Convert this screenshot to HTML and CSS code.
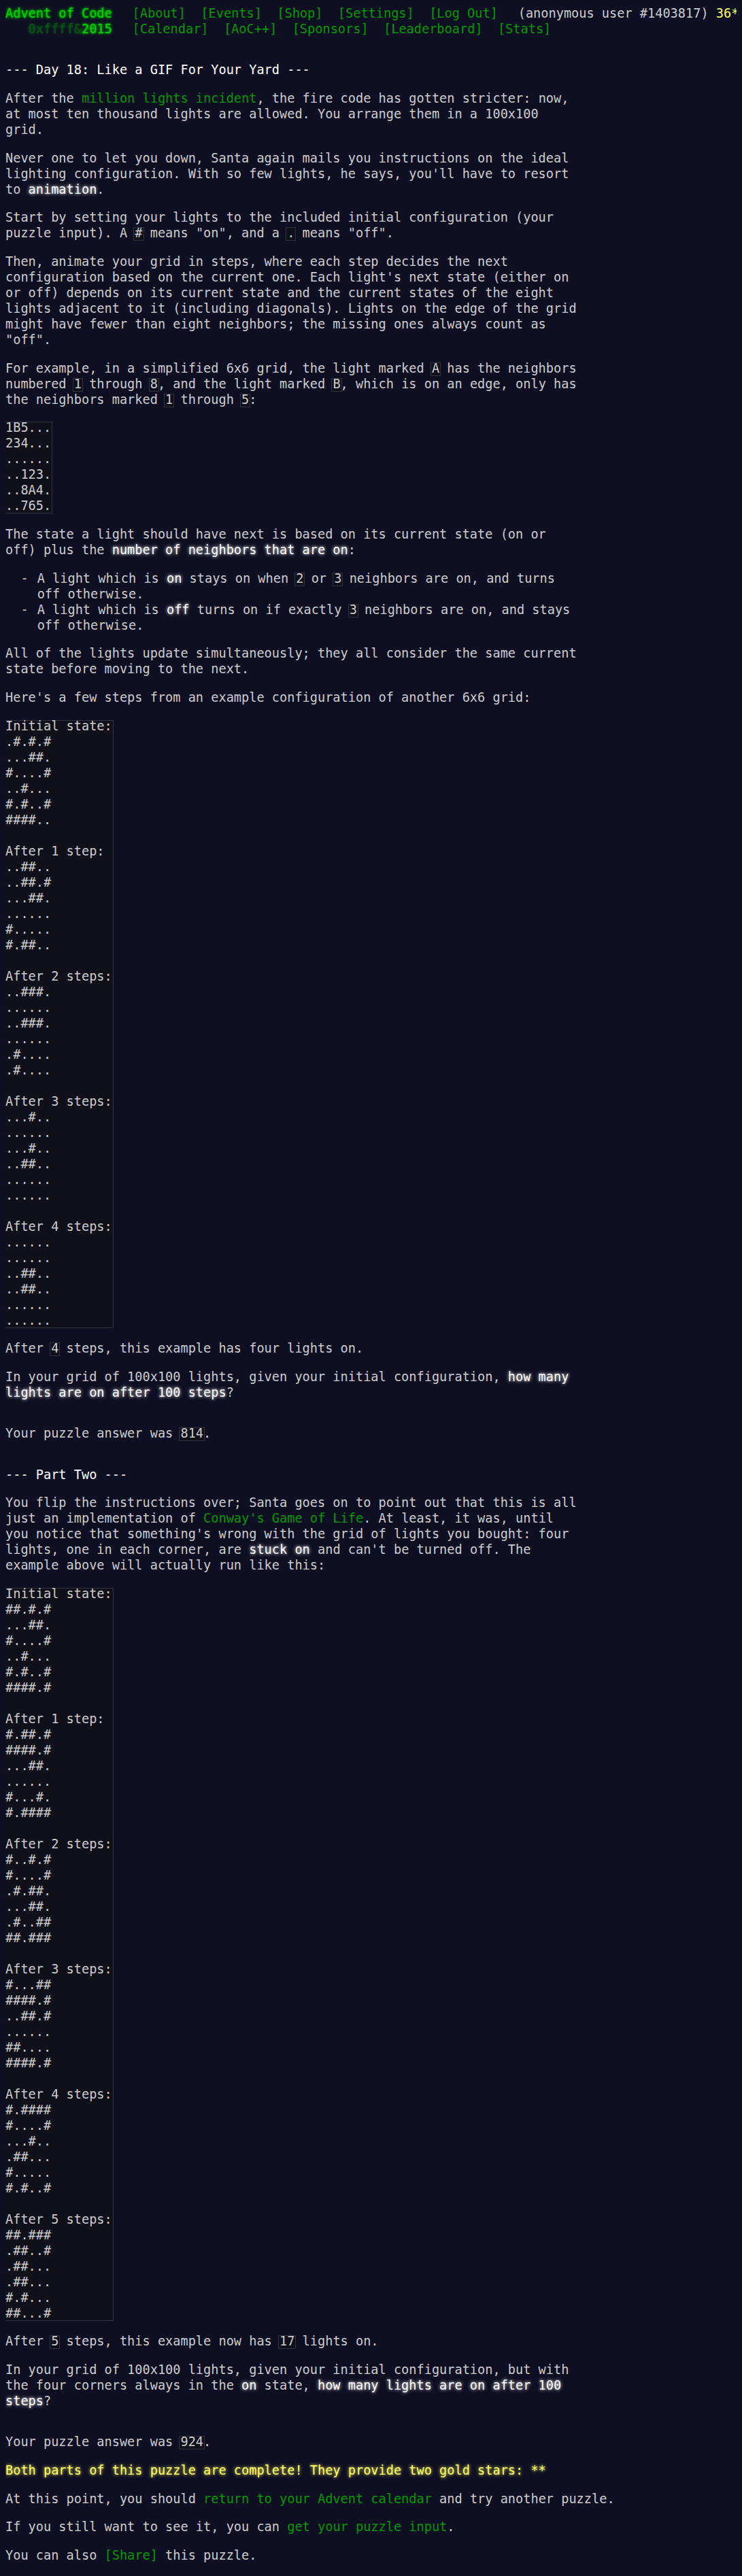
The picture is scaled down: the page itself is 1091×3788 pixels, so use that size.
FILE: index.html
```html
<!DOCTYPE html>
<html lang="en">
<head>
<meta charset="utf-8">
<title>Day 18 - Advent of Code 2015</title>
<link rel="stylesheet" href="styles.css">
</head>
<body class="page">
<header class="site-header">
  <div class="header-row">
    <h1 class="title"><a class="title-link" href="#">Advent of Code</a></h1>
    <nav class="nav">
      <ul class="nav-list">
        <li class="nav-item"><a class="nav-link" href="#">[About]</a></li>
        <li class="nav-item"><a class="nav-link" href="#">[Events]</a></li>
        <li class="nav-item"><a class="nav-link" href="#">[Shop]</a></li>
        <li class="nav-item"><a class="nav-link" href="#">[Settings]</a></li>
        <li class="nav-item"><a class="nav-link" href="#">[Log Out]</a></li>
      </ul>
    </nav>
    <div class="user">(anonymous user #1403817) <span class="star-count">36*</span></div>
  </div>
  <div class="header-row">
    <h1 class="title">&nbsp;&nbsp;&nbsp;<span class="title-link title-wrap">0xffff&amp;</span><a class="title-link" href="#">2015</a></h1>
    <nav class="nav">
      <ul class="nav-list">
        <li class="nav-item"><a class="nav-link" href="#">[Calendar]</a></li>
        <li class="nav-item"><a class="nav-link" href="#">[AoC++]</a></li>
        <li class="nav-item"><a class="nav-link" href="#">[Sponsors]</a></li>
        <li class="nav-item"><a class="nav-link" href="#">[Leaderboard]</a></li>
        <li class="nav-item"><a class="nav-link" href="#">[Stats]</a></li>
      </ul>
    </nav>
  </div>
</header>
<main class="main">
<article class="article">
<h2 class="day-title">--- Day 18: Like a GIF For Your Yard ---</h2>
<p class="para first">After the <a class="link" href="#">million lights incident</a>, the fire code has gotten stricter: now, at most ten thousand lights are allowed. You arrange them in a 100x100 grid.</p>
<p class="para">Never one to let you down, Santa again mails you instructions on the ideal lighting configuration. With so few lights, he says, you'll have to resort to <em class="em">animation</em>.</p>
<p class="para">Start by setting your lights to the included initial configuration (your puzzle input). A <code class="c">#</code> means "on", and a <code class="c">.</code> means "off".</p>
<p class="para">Then, animate your grid in steps, where each step decides the next configuration based on the current one. Each light's next state (either on or off) depends on its current state and the current states of the eight lights adjacent to it (including diagonals). Lights on the edge of the grid might have fewer than eight neighbors; the missing ones always count as "off".</p>
<p class="para">For example, in a simplified 6x6 grid, the light marked <code class="c">A</code> has the neighbors numbered <code class="c">1</code> through <code class="c">8</code>, and the light marked <code class="c">B</code>, which is on an edge, only has the neighbors marked <code class="c">1</code> through <code class="c">5</code>:</p>
<pre class="block"><code class="c">1B5...
234...
......
..123.
..8A4.
..765.</code></pre>
<p class="para">The state a light should have next is based on its current state (on or off) plus the <em class="em">number of neighbors that are on</em>:</p>
<ul class="rules">
<li class="rule">A light which is <em class="em">on</em> stays on when <code class="c">2</code> or <code class="c">3</code> neighbors are on, and turns off otherwise.</li>
<li class="rule">A light which is <em class="em">off</em> turns on if exactly <code class="c">3</code> neighbors are on, and stays off otherwise.</li>
</ul>
<p class="para">All of the lights update simultaneously; they all consider the same current state before moving to the next.</p>
<p class="para">Here's a few steps from an example configuration of another 6x6 grid:</p>
<pre class="block"><code class="c">Initial state:
.#.#.#
...##.
#....#
..#...
#.#..#
####..

After 1 step:
..##..
..##.#
...##.
......
#.....
#.##..

After 2 steps:
..###.
......
..###.
......
.#....
.#....

After 3 steps:
...#..
......
...#..
..##..
......
......

After 4 steps:
......
......
..##..
..##..
......
......</code></pre>
<p class="para">After <code class="c">4</code> steps, this example has four lights on.</p>
<p class="para">In your grid of 100x100 lights, given your initial configuration, <em class="em">how many lights are on after 100 steps</em>?</p>
</article>
<p class="para answer">Your puzzle answer was <code class="c">814</code>.</p>
<article class="article">
<h2 class="day-title">--- Part Two ---</h2>
<p class="para first">You flip the instructions over; Santa goes on to point out that this is all just an implementation of <a class="link" href="#">Conway's Game of Life</a>. At least, it was, until you notice that something's wrong with the grid of lights you bought: four lights, one in each corner, are <em class="em">stuck on</em> and can't be turned off. The example above will actually run like this:</p>
<pre class="block"><code class="c">Initial state:
##.#.#
...##.
#....#
..#...
#.#..#
####.#

After 1 step:
#.##.#
####.#
...##.
......
#...#.
#.####

After 2 steps:
#..#.#
#....#
.#.##.
...##.
.#..##
##.###

After 3 steps:
#...##
####.#
..##.#
......
##....
####.#

After 4 steps:
#.####
#....#
...#..
.##...
#.....
#.#..#

After 5 steps:
##.###
.##..#
.##...
.##...
#.#...
##...#</code></pre>
<p class="para">After <code class="c">5</code> steps, this example now has <code class="c">17</code> lights on.</p>
<p class="para">In your grid of 100x100 lights, given your initial configuration, but with the four corners always in the <em class="em">on</em> state, <em class="em">how many lights are on after 100 steps</em>?</p>
</article>
<p class="para answer">Your puzzle answer was <code class="c">924</code>.</p>
<p class="para success">Both parts of this puzzle are complete! They provide two gold stars: **</p>
<p class="para">At this point, you should <a class="link" href="#">return to your Advent calendar</a> and try another puzzle.</p>
<p class="para">If you still want to see it, you can <a class="link" href="#">get your puzzle input</a>.</p>
<p class="para">You can also <span class="share">[Share]</span> this puzzle.</p>
</main>
</body>
</html>
```
FILE: styles.css
```css
.page {
  margin: 8px;
  background: #0f0f23;
  color: #cccccc;
  font-family: "DejaVu Sans Mono", "Liberation Mono", monospace;
  font-size: 18.6px;
  line-height: 23px;
}

/* header */
.site-header {
  margin-bottom: 37.33px;
  white-space: nowrap;
}
.header-row {
  display: flex;
  align-items: flex-start;
  height: 23px;
}
.title {
  margin: 0;
  padding-right: 18.67px;
  font-size: inherit;
  font-weight: normal;
  flex-shrink: 0;
  white-space: pre;
}
.title-link {
  color: #00cc00;
  text-decoration: none;
  text-shadow: 0 0 2px #00cc00, 0 0 5px #00cc00;
}
.title-wrap {
  opacity: .33;
}
.nav {
  flex-shrink: 0;
}
.nav-list {
  display: flex;
  list-style: none;
  margin: 0;
  padding: 0;
}
.nav-item {
  padding: 0 11.2px;
}
.nav-link {
  color: #009900;
  text-decoration: none;
}
.user {
  padding-left: 18.67px;
  flex-shrink: 0;
}
.star-count {
  color: #ffff66;
}

/* article */
.article {
  width: 842px;
}
.day-title {
  color: #ffffff;
  font-size: inherit;
  font-weight: normal;
  margin: 37.33px 0 18.67px;
  white-space: nowrap;
}
.para {
  margin: 18.67px 0;
}
.first {
  margin-top: 0;
}
.answer {
  margin-top: 37.33px;
}
.em {
  color: #ffffff;
  font-style: normal;
  text-shadow: 0 0 5px #ffffff;
}
.link {
  color: #009900;
  text-decoration: none;
}
.share {
  color: #009900;
}
.c {
  position: relative;
  z-index: 0;
  display: inline-block;
  margin: 0;
  padding: 0;
  font-family: inherit;
  font-size: inherit;
  line-height: inherit;
}
.c::before {
  content: "";
  position: absolute;
  z-index: -1;
  left: -2px;
  right: -2px;
  top: 3px;
  bottom: 0;
  border: 1px solid #333340;
  background: #10101a;
}
.block {
  margin: 18.67px 0;
  font-family: inherit;
  font-size: inherit;
  line-height: inherit;
}
.rules {
  list-style: none;
  margin: 18.67px 0;
  padding: 0;
}
.rule {
  position: relative;
  padding-left: 46.67px;
}
.rule::before {
  content: "\00a0\00a0-\00a0";
  position: absolute;
  left: 0;
}
.success {
  color: #ffff66;
  text-shadow: 0 0 5px #ffff66;
}
```
